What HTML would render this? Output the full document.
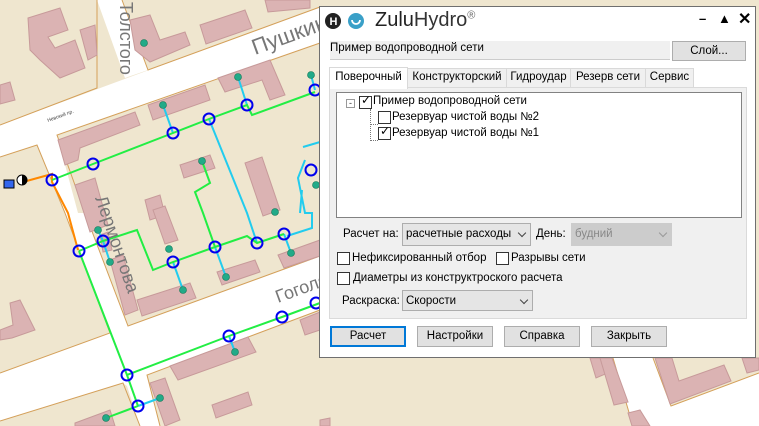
<!DOCTYPE html>
<html><head><meta charset="utf-8"><style>
*{margin:0;padding:0;box-sizing:border-box}
body{width:759px;height:426px;overflow:hidden;position:relative;background:#efe6cf;font-family:"Liberation Sans",sans-serif;font-size:11.5px;color:#000}
.abs{position:absolute}
#dlg{left:319px;top:6px;width:437px;height:352px;background:#fff;border:1px solid #6f6f6f}
.btn{position:absolute;background:#e1e1e1;border:1px solid #adadad;text-align:center;line-height:18px;font-size:11.5px}
.tab{position:absolute;top:68px;height:19px;border:1px solid #d9d9d9;border-bottom:none;background:#f0f0f0;line-height:17px;text-align:center;font-size:11.5px}
.cb{position:absolute;width:13px;height:13px;border:1px solid #333;background:#fff}
.sel{position:absolute;background:#e5e5e5;border:1px solid #adadad;line-height:20px;padding-left:3px}
.chev{position:absolute;right:5px;top:6px;width:6px;height:6px;border-right:1px solid #444;border-bottom:1px solid #444;transform:rotate(45deg)}
</style></head><body>
<svg class="abs" style="left:0;top:0" width="759" height="426">
<g fill="#fff">
<polygon points="0,125 320,7 320,43 57,135 78,213 85,213 128,326 320,256 320,310 147,375 160,426 140,426 127,386 123,383 0,421 0,373 110,333 65,213 37,145 0,157"/>
<polygon points="97,0 122,0 148,70 125,78"/>
<polygon points="613,358 653,358 671,406 759,373 759,426 633,426"/>
</g>
<g fill="none" stroke="#d4a05a" stroke-width="1">
<polyline points="0,125 97,88 97,0"/><polyline points="122,0 148,70 320,7"/>
<polyline points="0,157 37,145 65,213 110,333 0,373"/><polyline points="320,43 57,135 85,213 128,326 320,256"/>
<polyline points="0,421 123,383 140,426"/><polyline points="160,426 147,375 320,310"/>
<polyline points="633,426 613,358"/><polyline points="653,358 671,406 759,373"/>
</g>
<g fill="#dbb3b3" stroke="#c79a9a">
<polygon points="28,18 60,8 68,30 48,37 55,48 75,40 85,68 60,78 40,60 30,50"/>
<polygon points="80,30 95,25 97,55 88,60"/>
<polygon points="130,20 150,15 160,40 185,32 190,45 150,62 135,50"/>
<polygon points="200,25 245,10 252,28 206,44"/>
<polygon points="265,0 310,0 310,8 268,12"/>
<polygon points="0,85 10,82 15,100 0,104"/>
<polygon points="218,78 270,60 285,95 270,100 262,80 225,92"/>
<polygon points="148,105 205,85 210,100 153,120"/>
<polygon points="58,140 135,112 140,125 80,148 78,160 65,165"/>
<polygon points="180,165 210,155 215,168 184,178"/>
<polygon points="245,163 262,157 280,210 263,216"/>
<polygon points="75,185 95,178 108,225 90,232"/>
<polygon points="145,200 160,195 165,215 150,220"/>
<polygon points="100,235 108,232 112,250 103,252"/>
<polygon points="110,260 123,255 138,310 125,315"/>
<polygon points="137,300 190,283 196,298 142,316"/>
<polygon points="153,210 165,206 178,240 165,244"/>
<polygon points="217,272 255,260 260,272 222,285"/>
<polygon points="278,255 320,240 320,256 284,268"/>
<polygon points="0,340 12,338 35,330 20,300 10,303 13,325 0,330"/>
<polygon points="170,366 248,337 256,352 178,380"/>
<polygon points="300,320 320,312 320,330 305,335"/>
<polygon points="150,383 165,378 180,420 165,426"/>
<polygon points="212,405 248,392 252,405 216,418"/>
<polygon points="75,423 110,410 115,426 75,426"/>
<polygon points="590,358 603,358 610,372 596,378"/>
<polygon points="600,358 612,358 628,402 614,405"/>
<polygon points="628,413 640,410 650,426 632,426"/>
<polygon points="655,358 672,358 679,381 724,365 731,381 670,404"/>
<polygon points="742,358 759,358 759,370 747,373"/>
<polygon points="320,420 330,418 330,426 320,426"/>
</g>
<g fill="none" stroke-width="2">
<polyline stroke="#ff8800" points="23,182 52,174 52,182 68,213 78,250"/>
<g stroke="#22ccee">
<polyline points="163,105 173,133"/><polyline points="238,77 247,105"/><polyline points="311,75 315,90"/>
<polyline points="209,119 247,213 257,243"/><polyline points="98,230 103,241 110,262"/>
<polyline points="173,262 183,290"/><polyline points="215,247 226,277"/>
<polyline points="284,234 291,253"/><polyline points="303,147 320,142"/>
<polyline points="305,160 298,178 305,213 312,213 312,228 287,236"/><polyline points="302,190 300,213"/>
<polyline points="138,406 160,398"/><polyline points="229,336 235,352"/>
</g>
<g stroke="#22ee44">
<polyline points="52,180 93,164 173,133 209,119 247,105 252,115 315,92"/>
<polyline points="79,251 127,375 138,406"/><polyline points="138,406 106,418"/>
<polyline points="127,375 229,336 282,317 320,303"/>
<polyline points="79,251 103,241 137,230 153,270 173,262 215,247 247,236 257,243 284,234"/>
<polyline points="202,161 210,183 195,192 203,213 215,247"/>
</g>
</g>
<g fill="#22aa88" stroke="#117755" stroke-width=".6">
<circle cx="144" cy="43" r="3.5"/><circle cx="163" cy="105" r="3.5"/><circle cx="238" cy="77" r="3.5"/><circle cx="311" cy="75" r="3.5"/>
<circle cx="202" cy="161" r="3.5"/><circle cx="275" cy="212" r="3.5"/><circle cx="316" cy="185" r="3.5"/>
<circle cx="98" cy="230" r="3.5"/><circle cx="110" cy="262" r="3.5"/><circle cx="169" cy="249" r="3.5"/>
<circle cx="183" cy="290" r="3.5"/><circle cx="226" cy="277" r="3.5"/><circle cx="291" cy="253" r="3.5"/>
<circle cx="235" cy="352" r="3.5"/><circle cx="160" cy="398" r="3.5"/><circle cx="106" cy="418" r="3.5"/>
</g>
<g fill="none" stroke="#0000ee" stroke-width="2">
<circle cx="52" cy="180" r="5.5"/><circle cx="93" cy="164" r="5.5"/><circle cx="173" cy="133" r="5.5"/><circle cx="209" cy="119" r="5.5"/><circle cx="247" cy="105" r="5.5"/><circle cx="315" cy="90" r="5.5"/><circle cx="311" cy="170" r="5.5"/>
<circle cx="79" cy="251" r="5.5"/><circle cx="103" cy="241" r="5.5"/><circle cx="173" cy="262" r="5.5"/><circle cx="215" cy="247" r="5.5"/><circle cx="257" cy="243" r="5.5"/><circle cx="284" cy="234" r="5.5"/>
<circle cx="127" cy="375" r="5.5"/><circle cx="138" cy="406" r="5.5"/><circle cx="229" cy="336" r="5.5"/><circle cx="282" cy="317" r="5.5"/><circle cx="316" cy="303" r="5.5"/>
</g>
<rect x="4" y="180" width="10" height="8" fill="#3366ee" stroke="#000"/>
<circle cx="22" cy="180" r="5" fill="#fff" stroke="#000"/><path d="M22,175 A5,5 0 0 1 22,185 Z" fill="#000"/>
<g fill="#777" font-family="Liberation Sans,sans-serif">
<text x="255" y="55" font-size="22" transform="rotate(-20 255 55)">Пушкина</text>
<text x="120" y="2" font-size="18" transform="rotate(90 120 2)">Толстого</text>
<text x="95" y="198" font-size="18" transform="rotate(71 95 198)">Лермонтова</text>
<text x="278" y="303" font-size="18" transform="rotate(-20 278 303)">Гоголя</text>
<text x="48" y="122" font-size="5" fill="#444" transform="rotate(-20 48 122)">Невский пр.</text>
</g>
</svg>

<div id="dlg" class="abs">
<svg class="abs" style="left:5px;top:5px" width="40" height="18"><circle cx="8" cy="9" r="8" fill="#222"/><text x="4.5" y="13" fill="#fff" font-size="11" font-weight="bold" font-family="Liberation Sans">H</text><circle cx="31" cy="9" r="8" fill="#3aa0c8"/><path d="M27,8 A4,4 0 0 0 35,8" stroke="#fff" stroke-width="1.8" fill="none"/></svg>
<div class="abs" style="left:55px;top:2px;font-size:20px;color:#222">Zulu<span style="color:#333">Hydro</span><sup style="font-size:11px;color:#666">®</sup></div>
<div class="abs" style="left:379px;top:4px;font-size:13px;font-weight:bold">–</div>
<div class="abs" style="left:398px;top:4px;font-size:13px">▲</div>
<div class="abs" style="left:418px;top:2px;font-size:16px;font-weight:bold">✕</div>
<div class="abs" style="left:10px;top:34px;width:340px;height:19px;background:#f0f0f0;border-bottom:1px solid #ccc;line-height:15px">Пример водопроводной сети</div>
<div class="btn" style="left:352px;top:34px;width:74px;height:20px">Слой...</div>
<div class="abs" style="left:9px;top:80px;width:418px;height:232px;background:#f0f0f0;border:1px solid #dadada"></div>
<div class="tab" style="left:9px;top:60px;width:79px;height:22px;background:#fff;line-height:18px">Поверочный</div>
<div class="tab" style="left:87px;top:61px;width:100px">Конструкторский</div>
<div class="tab" style="left:186px;top:61px;width:65px">Гидроудар</div>
<div class="tab" style="left:250px;top:61px;width:76px">Резерв сети</div>
<div class="tab" style="left:325px;top:61px;width:49px">Сервис</div>
<div class="abs" style="left:16px;top:85px;width:406px;height:126px;background:#fff;border:1px solid #828282">
 <div class="abs" style="left:9px;top:6px;width:9px;height:9px;border:1px solid #999;font-size:9px;line-height:6px;text-align:center;color:#333">-</div>
 <div class="abs" style="left:33px;top:16px;width:1px;height:32px;border-left:1px dotted #777"></div>
 <div class="abs" style="left:33px;top:31px;width:8px;border-top:1px dotted #777"></div>
 <div class="abs" style="left:33px;top:47px;width:8px;border-top:1px dotted #777"></div>
 <div class="cb" style="left:22px;top:3px"></div><div class="abs" style="left:24px;top:0px;font-size:12px">✓</div>
 <div class="abs" style="left:36px;top:2px">Пример водопроводной сети</div>
 <div class="cb" style="left:41px;top:18px"></div>
 <div class="abs" style="left:55px;top:18px">Резервуар чистой воды №2</div>
 <div class="cb" style="left:41px;top:34px"></div><div class="abs" style="left:43px;top:31px;font-size:12px">✓</div>
 <div class="abs" style="left:55px;top:34px">Резервуар чистой воды №1</div>
</div>
<div class="abs" style="left:23px;top:221px">Расчет на:</div>
<div class="sel" style="left:82px;top:216px;width:129px;height:23px">расчетные расходы<div class="chev"></div></div>
<div class="abs" style="left:216px;top:221px">День:</div>
<div class="sel" style="left:251px;top:216px;width:101px;height:23px;background:#ccc;border-color:#ccc;color:#888">будний<div class="chev" style="border-color:#999"></div></div>
<div class="cb" style="left:17px;top:245px"></div><div class="abs" style="left:32px;top:245px">Нефиксированный отбор</div>
<div class="cb" style="left:176px;top:245px"></div><div class="abs" style="left:191px;top:245px">Разрывы сети</div>
<div class="cb" style="left:17px;top:265px"></div><div class="abs" style="left:33px;top:265px">Диаметры из конструктроского расчета</div>
<div class="abs" style="left:22px;top:288px">Раскраска:</div>
<div class="sel" style="left:82px;top:283px;width:131px;height:21px;line-height:21px">Скорости<div class="chev"></div></div>
<div class="btn" style="left:10px;top:319px;width:76px;height:21px;border:2px solid #0078d7;line-height:17px">Расчет</div>
<div class="btn" style="left:97px;top:319px;width:76px;height:21px">Настройки</div>
<div class="btn" style="left:184px;top:319px;width:76px;height:21px">Справка</div>
<div class="btn" style="left:271px;top:319px;width:76px;height:21px">Закрыть</div>
</div>
</body></html>
